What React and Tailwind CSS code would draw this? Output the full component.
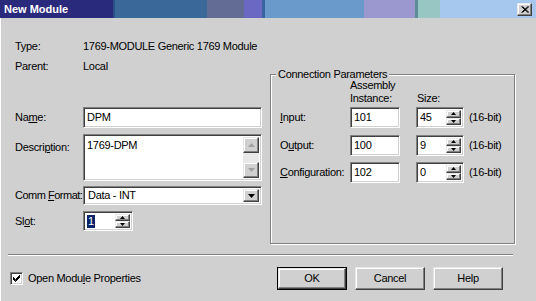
import React from 'react';

const SUNKEN =
  'bg-white border border-t-[#808080] border-l-[#808080] border-r-white border-b-white shadow-[inset_1px_1px_0_#404040,inset_-1px_-1px_0_#d0d0d0]';
const RAISED =
  'bg-[#d0d0d0] border border-t-[#e8e8e8] border-l-[#e8e8e8] border-r-[#404040] border-b-[#404040] shadow-[inset_-1px_-1px_0_#808080,inset_1px_1px_0_#ffffff]';

const titleSegments = [
  { w: 'w-[113px]', bg: 'bg-[#2a2a7c]', title: true },
  { w: 'w-[2px]', bg: 'bg-[#2c4f86]' },
  { w: 'w-[92px]', bg: 'bg-[#3a6898]' },
  { w: 'w-[37px]', bg: 'bg-[#626c94]' },
  { w: 'w-[18px]', bg: 'bg-[#6b68c4]' },
  { w: 'w-[3px]', bg: 'bg-[#3a64a0]' },
  { w: 'w-[99px]', bg: 'bg-[#6a9acb]' },
  { w: 'w-[51px]', bg: 'bg-[#9b98cf]' },
  { w: 'w-[3px]', bg: 'bg-[#5e8c98]' },
  { w: 'w-[22px]', bg: 'bg-[#98c6c2]' },
  { w: 'flex-1', bg: 'bg-[#a6c8ee]', close: true },
];

function Arrow({ dir = 'down', w = 7, h = 4, color = '#000' }) {
  const pts = dir === 'up' ? `0,${h} ${w / 2},0 ${w},${h}` : `0,0 ${w},0 ${w / 2},${h}`;
  return (
    <svg width={w} height={h} viewBox={`0 0 ${w} ${h}`}>
      <polygon points={pts} fill={color} />
    </svg>
  );
}

function TitleBar() {
  return (
    <div className="flex h-[18px] shrink-0">
      {titleSegments.map((s, i) => (
        <div key={i} className={`${s.w} ${s.bg} h-full flex items-center`}>
          {s.title && <span className="pl-[4px] text-white font-bold tracking-normal">New Module</span>}
          {s.close && (
            <div className="ml-auto mr-[4px]">
              <div className={`${RAISED} w-[15px] h-[13px] flex items-center justify-center`}>
                <svg width="8" height="7" viewBox="0 0 8 7">
                  <path d="M0.5 0.5 L7 6.5 M1.5 0.5 L8 6.5 M7 0.5 L0.5 6.5 M8 0.5 L1.5 6.5" stroke="#000" strokeWidth="1" />
                </svg>
              </div>
            </div>
          )}
        </div>
      ))}
    </div>
  );
}

function TextBox({ className = '', children }) {
  return (
    <div className={`${SUNKEN} ${className} flex items-center pl-[3px]`}>
      {children}
    </div>
  );
}

function Spin({ className = '', children }) {
  return (
    <div className={`${SUNKEN} ${className} flex p-[2px]`}>
      <div className="flex-1 flex items-center pl-[1px]">{children}</div>
      <div className="w-[15px] flex flex-col">
        <div className={`${RAISED} flex-1 flex items-center justify-center`}>
          <Arrow dir="up" w={5} h={3} />
        </div>
        <div className={`${RAISED} flex-1 flex items-center justify-center`}>
          <Arrow dir="down" w={5} h={3} />
        </div>
      </div>
    </div>
  );
}

function Button({ children, isDefault }) {
  const inner = (
    <div className={`${RAISED} w-full h-full flex items-center justify-center`}>{children}</div>
  );
  return isDefault ? (
    <div className="w-[70px] h-[23px] border border-black">{inner}</div>
  ) : (
    <div className="w-[70px] h-[23px]">{inner}</div>
  );
}

function ParamRow({ label, instance, size, className = '' }) {
  return (
    <div className={`flex items-center pl-[9px] ${className}`}>
      <span className="w-[70px] whitespace-nowrap">{label}</span>
      <TextBox className="w-[50px] h-[21px]">{instance}</TextBox>
      <Spin className="ml-[16px] w-[48px] h-[21px]">{size}</Spin>
      <span className="ml-[5px] whitespace-nowrap">(16-bit)</span>
    </div>
  );
}

export default function App() {
  return (
    <div className="w-[536px] h-[301px] overflow-hidden bg-[#d0d0d0] text-black text-[11px] leading-[13px] tracking-[-0.3px] font-['Liberation_Sans',Arial,sans-serif] flex flex-col">
      <TitleBar />

      <div className="flex-1 flex flex-col border-l border-l-white">
        <div className="flex">
          {/* Left column */}
          <div className="ml-[14px] w-[247px] pt-[22px] flex flex-col">
            <div className="flex h-[13px] items-center">
              <span className="w-[68px]">Type:</span>
              <span className="whitespace-nowrap">1769-MODULE Generic 1769 Module</span>
            </div>
            <div className="flex h-[13px] items-center mt-[7px]">
              <span className="w-[68px]">Parent:</span>
              <span>Local</span>
            </div>
            <div className="flex items-center mt-[34px]">
              <span className="w-[68px]">
                Na<u>m</u>e:
              </span>
              <TextBox className="w-[179px] h-[21px]">DPM</TextBox>
            </div>
            <div className="flex items-start mt-[6px]">
              <span className="w-[68px] mt-[7px]">
                Descri<u>p</u>tion:
              </span>
              <div className={`${SUNKEN} w-[179px] h-[47px] flex p-[2px]`}>
                <div className="flex-1 pl-[1px] pt-[2px]">1769-DPM</div>
                <div className="w-[16px] flex flex-col bg-[#e8e8e8]">
                  <div className={`${RAISED} h-[16px] flex items-center justify-center`}>
                    <Arrow dir="up" w={7} h={4} color="#a0a0a0" />
                  </div>
                  <div className="flex-1" />
                  <div className={`${RAISED} h-[16px] flex items-center justify-center`}>
                    <Arrow dir="down" w={7} h={4} color="#a0a0a0" />
                  </div>
                </div>
              </div>
            </div>
            <div className="flex items-center mt-[5px]">
              <span className="w-[68px] whitespace-nowrap tracking-[-0.5px]">
                Comm <u>F</u>ormat:
              </span>
              <div className={`${SUNKEN} w-[179px] h-[19px] flex p-[2px]`}>
                <div className="flex-1 flex items-center pl-[2px]">Data - INT</div>
                <div className={`${RAISED} w-[16px] flex items-center justify-center`}>
                  <Arrow dir="down" w={7} h={4} />
                </div>
              </div>
            </div>
            <div className="flex items-center mt-[6px]">
              <span className="w-[68px]">
                Sl<u>o</u>t:
              </span>
              <Spin className="w-[50px] h-[20px]">
                <span className="bg-[#0a246a] text-white px-[1px]">1</span>
              </Spin>
            </div>
          </div>

          {/* Connection parameters */}
          <fieldset className="ml-[8px] mt-[50px] w-[245px] h-[176px] border border-[#808080] shadow-[1px_1px_0_#ffffff,inset_1px_1px_0_#ffffff]">
            <legend className="ml-[5px] px-[2px] bg-[#d0d0d0] leading-[13px]">Connection Parameters</legend>
            <div className="flex items-end -mt-[2px] pl-[79px]">
              <div className="w-[67px]">
                Assembly
                <br />
                Instance:
              </div>
              <div>Size:</div>
            </div>
            <ParamRow className="mt-[2px]" label={<><u>I</u>nput:</>} instance="101" size="45" />
            <ParamRow className="mt-[7px]" label={<>O<u>u</u>tput:</>} instance="100" size="9" />
            <ParamRow className="mt-[6px]" label={<><u>C</u>onfiguration:</>} instance="102" size="0" />
          </fieldset>
        </div>

        {/* Separator */}
        <div className="mt-[10px] ml-[7px] w-[505px] h-[2px] border-t border-t-[#808080] border-b border-b-white" />

        {/* Footer */}
        <div className="mt-[11px] flex items-center">
          <div className="ml-[9px] flex items-center">
            <div className={`${SUNKEN} w-[13px] h-[13px] flex items-center justify-center`}>
              <svg width="7" height="7" viewBox="0 0 7 7">
                <path d="M0 2 L2.5 4.5 L7 0 M0 3 L2.5 5.5 L7 1 M0 4 L2.5 6.5 L7 2" stroke="#000" strokeWidth="1" fill="none" />
              </svg>
            </div>
            <span className="ml-[5px]">
              Open Modu<u>l</u>e Properties
            </span>
          </div>
          <div className="ml-auto mr-[33px] flex gap-[8px]">
            <Button isDefault>OK</Button>
            <Button>Cancel</Button>
            <Button>Help</Button>
          </div>
        </div>
      </div>
    </div>
  );
}
